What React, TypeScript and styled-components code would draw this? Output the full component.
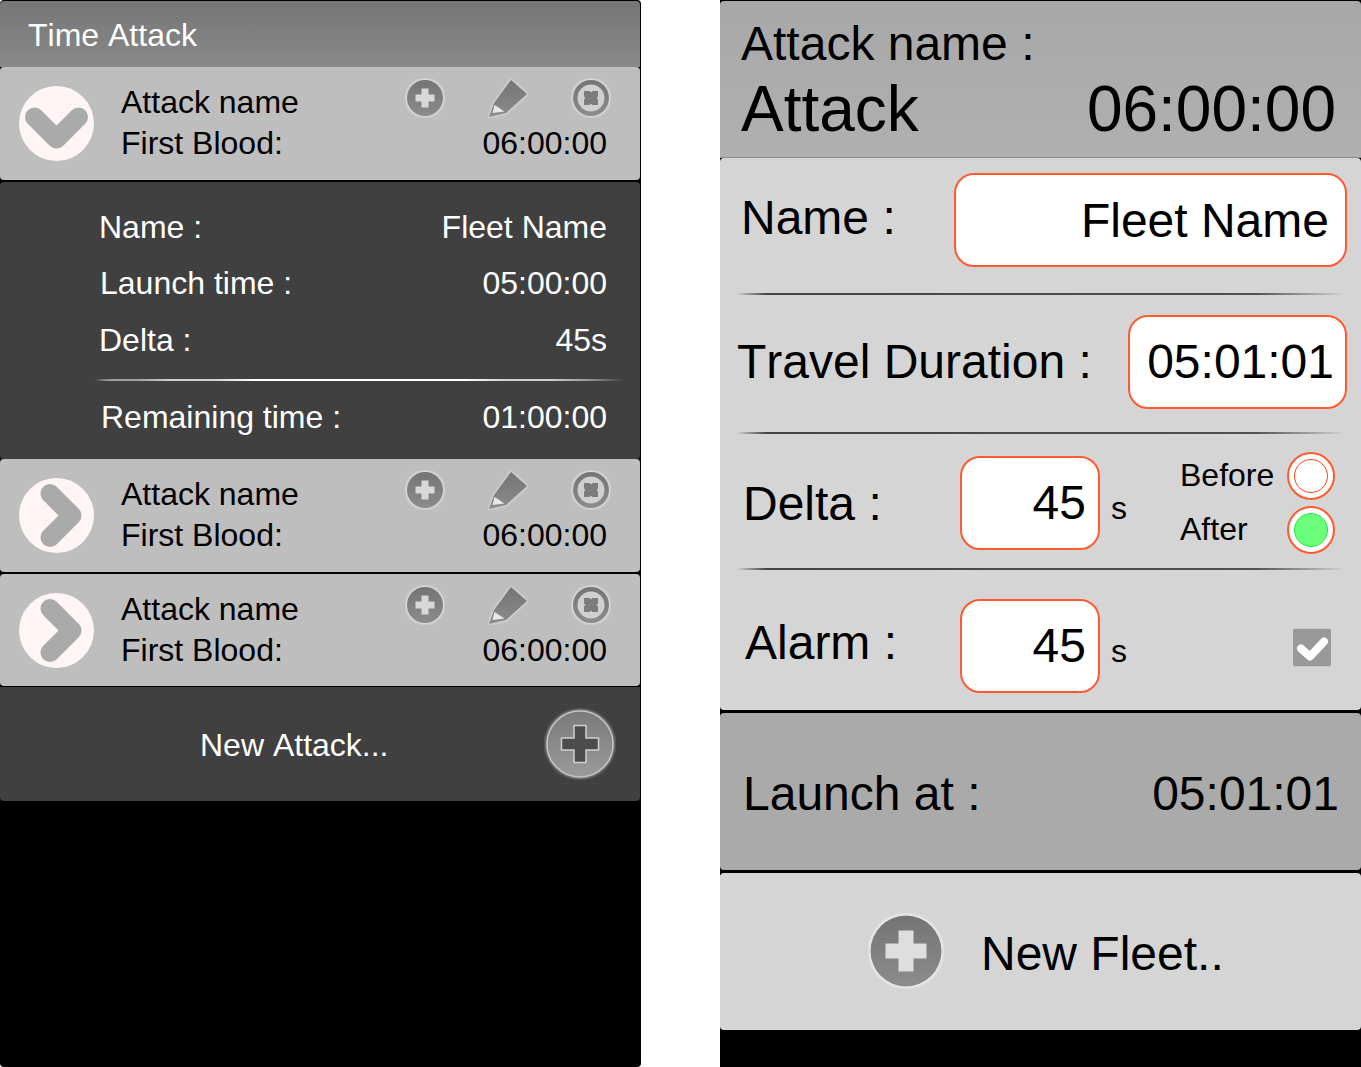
import styled, { createGlobalStyle } from "styled-components"

const GlobalStyle = createGlobalStyle`
  html, body {
    margin: 0;
    padding: 0;
    background: #fff;
    font-family: "Liberation Sans", Arial, sans-serif;
    font-kerning: none;
  }
`

const Page = styled.div`
  width: 1361px;
  height: 1067px;
  display: flex;
  justify-content: space-between;
  overflow: hidden;
`

const Phone = styled.div`
  width: 641px;
  height: 1067px;
  background: #000;
  border-radius: 4px;
  display: flex;
  flex-direction: column;
`

/* 왼쪽 화면 */
const LeftList = styled.div`
  width: 640px;
  padding-top: 1px;
  display: flex;
  flex-direction: column;
`

const TitleBar = styled.div`
  height: 66px;
  box-sizing: border-box;
  padding: 16px 0 0 28px;
  background: linear-gradient(#767676, #898989);
  border-radius: 4px 4px 0 0;
  color: #fff;
  font-size: 32px;
  line-height: 37px;
`

const AttackRow = styled.div<{ $height: number; $gap: number }>`
  height: ${(p) => p.$height}px;
  margin-bottom: ${(p) => p.$gap}px;
  box-sizing: border-box;
  padding: 14px 33px 0 19px;
  background: #bebebe;
  border-radius: 4px;
  display: flex;
  color: #000;
  font-size: 32px;
  line-height: 42px;
`

const Toggle = styled.svg`
  width: 75px;
  height: 75px;
  margin: 5px 27px 0 0;
  flex: none;
`

const RowInfo = styled.div`
  flex: 1;
  display: flex;
  flex-direction: column;
`

const RowLine = styled.div`
  display: flex;
  justify-content: space-between;
  height: 41px;
`

const RowIcons = styled.div`
  width: 206px;
  margin: -3px -4px 0 0;
  display: flex;
  justify-content: space-between;
  align-items: flex-start;
`

const SmallIcon = styled.svg`
  width: 40px;
  height: 40px;
  display: block;
`

const DetailPanel = styled.div`
  height: 277px;
  box-sizing: border-box;
  padding: 17px 33px 0 0;
  background: #404040;
  border-radius: 4px;
  color: #fff;
  font-size: 32px;
  line-height: 56px;
`

const DetailRow = styled.div<{ $left: number; $height: number }>`
  height: ${(p) => p.$height}px;
  padding-left: ${(p) => p.$left}px;
  display: flex;
  justify-content: space-between;
`

const DetailRule = styled.div`
  height: 2px;
  margin: 10px -20px 8px 93px;
  border-radius: 50%;
  background: linear-gradient(90deg, transparent, #fff 2%, #fff 92%, transparent);
`

const NewAttackBar = styled.div`
  height: 114px;
  margin-top: 1px;
  padding-left: 200px;
  background: #404040;
  border-radius: 0 0 4px 4px;
  display: flex;
  align-items: center;
  justify-content: space-between;
  box-sizing: border-box;
  padding-right: 24px;
  color: #fff;
  font-size: 32px;
`

const NewAttackLabel = styled.span`
  margin-top: 2px;
`

const BigAdd = styled.svg`
  width: 72px;
  height: 72px;
`

/* 오른쪽 화면 */
const RightScreen = styled.div`
  width: 641px;
  height: 1067px;
  padding-top: 1px;
  box-sizing: border-box;
  background: #000;
  display: flex;
  flex-direction: column;
`

const AttackHeader = styled.div`
  height: 157px;
  flex: none;
  box-sizing: border-box;
  padding: 15px 25px 0 21px;
  background: linear-gradient(#a8a8a8, #b0b0b0);
  border-bottom: 1px solid #8c8c8c;
  border-radius: 4px 4px 0 0;
  color: #000;
`

const HeaderLabel = styled.div`
  font-size: 48px;
  line-height: 56px;
`

const HeaderMain = styled.div`
  display: flex;
  justify-content: space-between;
  font-size: 64px;
  line-height: 74px;
`

const FormCard = styled.div`
  height: 552px;
  flex: none;
  background: #d5d5d5;
  border-radius: 4px;
  display: flex;
  flex-direction: column;
  color: #000;
`

const FormRow = styled.div<{ $height: number; $top?: number; $bottom?: number }>`
  height: ${(p) => p.$height}px;
  flex: none;
  display: flex;
  align-items: center;
  padding: ${(p) => p.$top ?? 0}px 14px ${(p) => p.$bottom ?? 0}px 0;
  box-sizing: border-box;
`

const FormLabel = styled.div<{ $left: number; $width: number; $shift: number }>`
  width: ${(p) => p.$width}px;
  padding-left: ${(p) => p.$left}px;
  flex: none;
  box-sizing: border-box;
  font-size: 48px;
  line-height: 56px;
  transform: translateY(${(p) => p.$shift}px);
`

const FieldBox = styled.div<{ $width: number; $pad: number }>`
  width: ${(p) => p.$width}px;
  height: 94px;
  flex: none;
  box-sizing: border-box;
  padding-right: ${(p) => p.$pad}px;
  background: #fff;
  border: 2px solid #ff5a30;
  border-radius: 20px;
  display: flex;
  align-items: center;
  justify-content: flex-end;
  font-size: 48px;
`

const Unit = styled.div`
  margin: 12px 0 0 11px;
  font-size: 32px;
`

const FormRule = styled.div`
  height: 2px;
  flex: none;
  margin: 0 15px 0 16px;
  background: linear-gradient(90deg, transparent, #444 5%, #505050 85%, transparent);
`

const TimingGroup = styled.div`
  margin-left: auto;
  margin-right: 12px;
  display: flex;
  flex-direction: column;
  gap: 6px;
  font-size: 32px;
`

const TimingOption = styled.div`
  width: 155px;
  height: 48px;
  display: flex;
  align-items: center;
  justify-content: space-between;
`

const Radio = styled.div`
  width: 48px;
  height: 48px;
  box-sizing: border-box;
  background: #fff;
  border: 2px solid #ff5a30;
  border-radius: 50%;
  display: flex;
  align-items: center;
  justify-content: center;
`

const RadioDot = styled.div<{ $on?: boolean }>`
  width: 34px;
  height: 34px;
  box-sizing: border-box;
  border-radius: 50%;
  border: 1px solid ${(p) => (p.$on ? "#1fee3f" : "#ff4316")};
  background: ${(p) => (p.$on ? "#6cff7c" : "#fff")};
`

const CheckMark = styled.svg`
  width: 38px;
  height: 38px;
  margin: 0 16px 0 auto;
  transform: translateY(1.5px);
`

const LaunchBar = styled.div`
  height: 157px;
  flex: none;
  margin-top: 3px;
  box-sizing: border-box;
  padding: 4px 22px 0 23px;
  background: #aaa;
  border-radius: 4px;
  display: flex;
  align-items: center;
  justify-content: space-between;
  color: #000;
  font-size: 48px;
`

const NewFleetBar = styled.div`
  height: 157px;
  flex: none;
  margin-top: 3px;
  box-sizing: border-box;
  padding: 3px 0 0 148px;
  background: #d5d5d5;
  border-radius: 4px;
  display: flex;
  align-items: center;
  gap: 37px;
  color: #000;
  font-size: 48px;
`

const FleetAdd = styled.svg`
  width: 76px;
  height: 76px;
  margin-bottom: 4px;
`

/* 그림 아이콘 */
const Defs = () => (
  <svg width="0" height="0" style={{ position: "absolute" }}>
    <defs>
      <linearGradient id="discFill" x1="0" y1="0" x2="0" y2="1">
        <stop offset="0" stopColor="#747474" />
        <stop offset="1" stopColor="#8c8c8c" />
      </linearGradient>
      <linearGradient id="bigFill" x1="0" y1="0" x2="0" y2="1">
        <stop offset="0" stopColor="#7a7a7a" />
        <stop offset="1" stopColor="#9a9a9a" />
      </linearGradient>
      <filter id="soft" x="-20%" y="-20%" width="140%" height="140%">
        <feGaussianBlur stdDeviation="0.5" />
      </filter>
      <filter id="halo" x="-20%" y="-20%" width="140%" height="140%">
        <feGaussianBlur stdDeviation="1" />
      </filter>
    </defs>
  </svg>
)

const Chevron = ({ open }: { open?: boolean }) => (
  <Toggle viewBox="0 0 75 75">
    <circle cx="37.5" cy="37.5" r="37.5" fill="#fff5f5" />
    <path
      d={open ? "M15.5 31 L37.5 53 L59.5 31" : "M31 15.5 L53 37.5 L31 59.5"}
      fill="none"
      stroke="#aaa"
      strokeWidth="19"
      strokeLinecap="round"
      strokeLinejoin="round"
    />
  </Toggle>
)

const AddIcon = () => (
  <SmallIcon viewBox="0 0 40 40">
    <circle cx="20" cy="20" r="19.5" fill="#dedede" filter="url(#halo)" />
    <circle cx="20" cy="20" r="18" fill="url(#discFill)" filter="url(#soft)" />
    <path d="M16.5 10.5 h7 v6 h6 v7 h-6 v6 h-7 v-6 h-6 v-7 h6 z" fill="#d8d8d8" filter="url(#soft)" />
  </SmallIcon>
)

const PencilIcon = () => (
  <SmallIcon viewBox="0 0 40 40">
    <path d="M1 39 L6 25 L23 2 L39 16 L18 35 Z" fill="#dedede" stroke="#dedede" strokeWidth="1.5" filter="url(#halo)" />
    <path d="M1 39 L6 25 L23 2 L39 16 L18 35 Z" fill="url(#discFill)" />
    <path d="M6.5 27 L4.5 35 L16.5 33.5 Z" fill="#e8e8e8" filter="url(#soft)" />
  </SmallIcon>
)

const RemoveIcon = () => (
  <SmallIcon viewBox="0 0 40 40">
    <circle cx="20" cy="20" r="19.5" fill="#dedede" filter="url(#halo)" />
    <circle cx="20" cy="20" r="18" fill="url(#discFill)" filter="url(#soft)" />
    <circle cx="20" cy="20" r="13.5" fill="#d0d0d0" filter="url(#soft)" />
    <path d="M15 15 L25 25 M25 15 L15 25" stroke="#7c7c7c" strokeWidth="8" strokeLinecap="round" filter="url(#soft)" />
  </SmallIcon>
)

const attacks = [
  { open: true, height: 113, gap: 2 },
  { open: false, height: 113, gap: 2 },
  { open: false, height: 112, gap: 0 },
]

const AttackItem = ({ open, height, gap }: { open: boolean; height: number; gap: number }) => (
  <AttackRow $height={height} $gap={gap}>
    <Chevron open={open} />
    <RowInfo>
      <RowLine>
        <span>Attack name</span>
        <RowIcons>
          <AddIcon />
          <PencilIcon />
          <RemoveIcon />
        </RowIcons>
      </RowLine>
      <RowLine>
        <span>First Blood:</span>
        <span>06:00:00</span>
      </RowLine>
    </RowInfo>
  </AttackRow>
)

const App = () => {
  return (
    <>
      <GlobalStyle />
      <Defs />
      <Page>
        <Phone>
          <LeftList>
            <TitleBar>Time Attack</TitleBar>
            <AttackItem {...attacks[0]} />
            <DetailPanel>
              <DetailRow $left={99} $height={56}><span>Name :</span><span>Fleet Name</span></DetailRow>
              <DetailRow $left={100} $height={57}><span>Launch time :</span><span>05:00:00</span></DetailRow>
              <DetailRow $left={99} $height={56.5}><span>Delta :</span><span>45s</span></DetailRow>
              <DetailRule />
              <DetailRow $left={101} $height={56}><span>Remaining time :</span><span>01:00:00</span></DetailRow>
            </DetailPanel>
            <AttackItem {...attacks[1]} />
            <AttackItem {...attacks[2]} />
            <NewAttackBar>
              <NewAttackLabel>New Attack...</NewAttackLabel>
              <BigAdd viewBox="0 0 72 72">
                <circle cx="36" cy="36" r="35" fill="#8a8a8a" filter="url(#halo)" />
                <circle cx="36" cy="36" r="33" fill="url(#bigFill)" stroke="#c4c4c4" strokeWidth="1.5" />
                <path d="M30 17.5 h12 v12.5 h12.5 v12 h-12.5 v12.5 h-12 v-12.5 h-12.5 v-12 h12.5 z" fill="#4c4c4c" stroke="#cfcfcf" strokeWidth="1.5" />
              </BigAdd>
            </NewAttackBar>
          </LeftList>
        </Phone>

        <RightScreen>
          <AttackHeader>
            <HeaderLabel>Attack name :</HeaderLabel>
            <HeaderMain>
              <span>Attack</span>
              <span>06:00:00</span>
            </HeaderMain>
          </AttackHeader>
          <FormCard>
            <FormRow $height={135} $bottom={11}>
              <FormLabel $left={21} $width={234} $shift={-2}>Name :</FormLabel>
              <FieldBox $width={393} $pad={16}>Fleet Name</FieldBox>
            </FormRow>
            <FormRule />
            <FormRow $height={137} $bottom={4}>
              <FormLabel $left={17} $width={408} $shift={0}>Travel Duration :</FormLabel>
              <FieldBox $width={219} $pad={11}>05:01:01</FieldBox>
            </FormRow>
            <FormRule />
            <FormRow $height={134} $top={3}>
              <FormLabel $left={23} $width={240} $shift={1}>Delta :</FormLabel>
              <FieldBox $width={140} $pad={12}>45</FieldBox>
              <Unit>s</Unit>
              <TimingGroup>
                <TimingOption><span>Before</span><Radio><RadioDot /></Radio></TimingOption>
                <TimingOption><span>After</span><Radio><RadioDot $on /></Radio></TimingOption>
              </TimingGroup>
            </FormRow>
            <FormRule />
            <FormRow $height={140} $top={11}>
              <FormLabel $left={25} $width={240} $shift={-3}>Alarm :</FormLabel>
              <FieldBox $width={140} $pad={12}>45</FieldBox>
              <Unit>s</Unit>
              <CheckMark viewBox="0 0 38 38">
                <rect width="38" height="38" rx="2" fill="#999" />
                <path d="M8 20 L17 28 L31 13" fill="none" stroke="#fff" strokeWidth="8" strokeLinecap="round" strokeLinejoin="round" />
              </CheckMark>
            </FormRow>
          </FormCard>
          <LaunchBar>
            <span>Launch at :</span>
            <span>05:01:01</span>
          </LaunchBar>
          <NewFleetBar>
            <FleetAdd viewBox="0 0 76 76">
              <circle cx="38" cy="38" r="37.5" fill="#ececec" filter="url(#halo)" />
              <circle cx="38" cy="38" r="35.5" fill="url(#discFill)" filter="url(#soft)" />
              <path d="M30.5 17.5 h15 v13 h13 v15 h-13 v13 h-15 v-13 h-13 v-15 h13 z" fill="#dedede" filter="url(#soft)" />
            </FleetAdd>
            <span>New Fleet..</span>
          </NewFleetBar>
        </RightScreen>
      </Page>
    </>
  )
}

export default App
